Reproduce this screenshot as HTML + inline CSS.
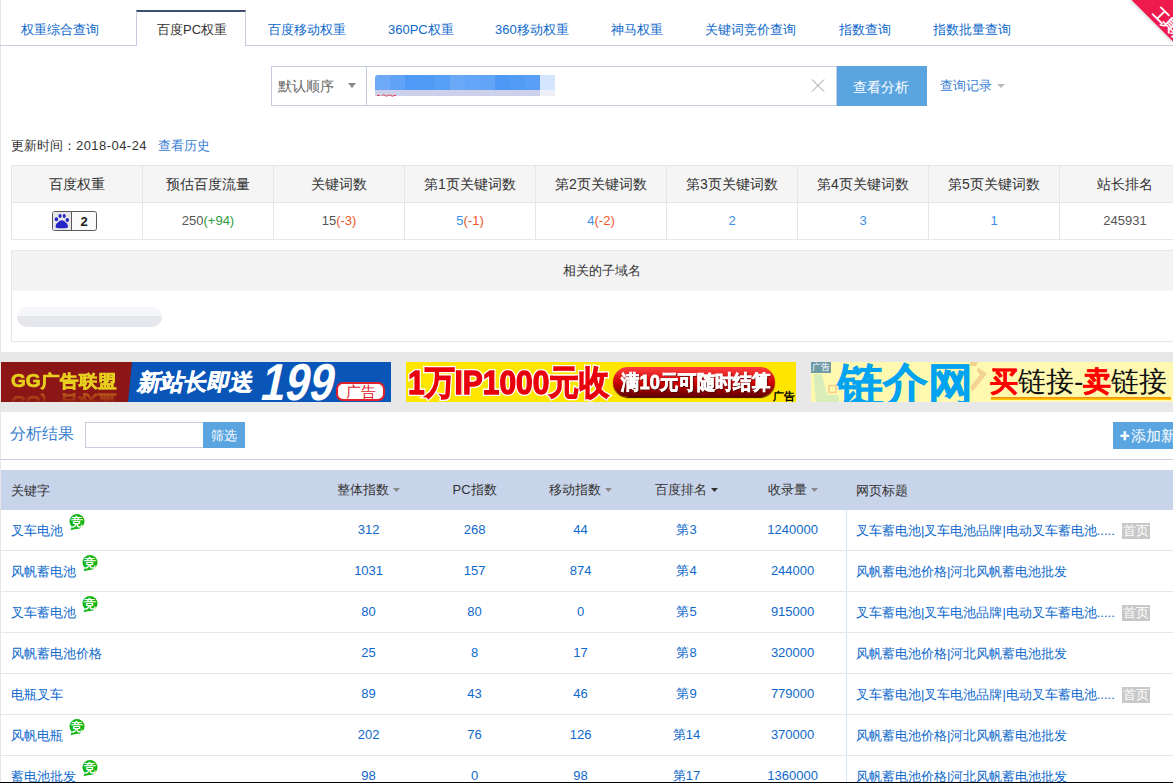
<!DOCTYPE html>
<html><head><meta charset="utf-8">
<style>
*{margin:0;padding:0;box-sizing:border-box}
html,body{width:1173px;height:783px;overflow:hidden;background:#fff}
body{position:relative;font-family:"Liberation Sans",sans-serif;font-size:13px;color:#333}
.a{position:absolute}
.t{position:absolute;white-space:nowrap;line-height:15px}
.blue{color:#0e69cc}
.c1h{top:166px;width:131px;height:37px;line-height:36px;text-align:center;background:#f5f5f5;border-right:1px solid #e6e6e6;border-bottom:1px solid #e6e6e6;color:#333;font-size:14px}
.c1b{top:203px;width:131px;height:37px;line-height:36px;text-align:center;border-right:1px solid #e6e6e6;border-bottom:1px solid #e6e6e6;font-size:13px}
.badge{display:inline-block;vertical-align:middle;width:45px;height:20px;border:1px solid #777;border-radius:2px;background:#fff;position:relative;margin-top:-3px}
.badge .paw{position:absolute;left:0;top:0;width:19px;height:18px;background:#ddd;border-right:1px solid #777}
.badge b{position:absolute;left:19px;top:0;width:24px;line-height:18px;text-align:center;font-size:13px;color:#222}
.mh{top:470px;width:106px;height:40px;line-height:40px;text-align:center;color:#333}
.mb{width:106px;height:40px;line-height:40px;text-align:center;color:#0e69cc}
.jing{display:inline-block;position:relative;top:-18px;margin-left:6px;width:16px;height:17px;vertical-align:top;margin-top:9px}
.sy{display:inline-block;margin-left:7px;width:28px;height:16px;line-height:16px;background:#c8c8c8;color:#fff;text-align:center;font-size:13px;vertical-align:0px}

</style></head><body>
<!-- left border -->
<div class="a" style="left:0;top:0;width:1px;height:783px;background:#e6e6e6"></div>

<!-- tabs -->
<div class="a" style="left:0;top:45px;width:1173px;height:1px;background:#c6cde0"></div>
<div class="a" style="left:136px;top:10px;width:110px;height:36px;background:#fff;border:1px solid #c6cde0;border-bottom:none;border-top:2px solid #3e4e6e"></div>
<div class="t blue" style="left:21px;top:22px">权重综合查询</div>
<div class="t" style="left:157px;top:22px;color:#333">百度PC权重</div>
<div class="t blue" style="left:268px;top:22px">百度移动权重</div>
<div class="t blue" style="left:388px;top:22px">360PC权重</div>
<div class="t blue" style="left:495px;top:22px">360移动权重</div>
<div class="t blue" style="left:611px;top:22px">神马权重</div>
<div class="t blue" style="left:705px;top:22px">关键词竞价查询</div>
<div class="t blue" style="left:839px;top:22px">指数查询</div>
<div class="t blue" style="left:933px;top:22px">指数批量查询</div>
<!-- ribbon -->
<div class="a" style="left:1100px;top:0;width:73px;height:60px;overflow:hidden">
<svg class="a" style="left:0;top:0" width="73" height="60"><defs><filter id="sh" x="-20%" y="-20%" width="140%" height="140%"><feGaussianBlur stdDeviation="1.5"/></filter></defs><polygon points="29,0 73,0 73,44" fill="#000" opacity=".12" filter="url(#sh)"/><polygon points="31.5,0 73,0 73,41.5" fill="#ee1a4e"/></svg>
<div class="a" style="left:0;top:0;width:73px;height:60px;clip-path:polygon(31.5px 0,73px 0,73px 41.5px)"><div class="t" style="left:61px;top:5px;font-size:15px;line-height:15px;font-weight:bold;color:#fff;transform:rotate(45deg);transform-origin:left top;letter-spacing:-2px">工具箱</div></div>
</div>

<!-- search -->
<div class="a" style="left:271px;top:66px;width:566px;height:40px;border:1px solid #c6cde0"></div>
<div class="a" style="left:366px;top:66px;width:1px;height:40px;background:#c6cde0"></div>
<div class="t" style="left:278px;top:78px;color:#666;font-size:14px;line-height:16px">默认顺序</div>
<svg class="a" style="left:348px;top:83px" width="8" height="5"><polygon points="0,0 8,0 4,5" fill="#888"/></svg>
<div class="a" style="left:375px;top:75px;width:165px;height:15px;border-radius:3px 0 0 0;background:linear-gradient(90deg,#6eaaf7 0px,#6eaaf7 15px,#60a3f7 15px,#60a3f7 30px,#4f9af7 30px,#4f9af7 45px,#509bf6 45px,#509bf6 60px,#579ff7 60px,#579ff7 75px,#6aa9f8 75px,#6aa9f8 90px,#64a6f8 90px,#64a6f8 105px,#62a5f7 105px,#62a5f7 120px,#4e99f6 120px,#4e99f6 135px,#529cf6 135px,#529cf6 150px,#5a9ff7 150px,#5a9ff7 165px)"></div>
<div class="a" style="left:375px;top:90px;width:165px;height:6px;background:#cdd0ea"></div>
<div class="a" style="left:540px;top:75px;width:15px;height:15px;background:#d4e6fd"></div>
<div class="a" style="left:540px;top:90px;width:15px;height:6px;background:#eef0f8"></div>
<svg class="a" style="left:377px;top:93px" width="20" height="4"><path d="M0,2.5 L3,2.5 M5,2.5 Q6.5,1 8,2.5 T11,2.5 T14,2.5 T17,2.5 L19,2.5" stroke="#e02020" stroke-width="1" fill="none" opacity=".8"/></svg>
<svg class="a" style="left:811px;top:79px" width="14" height="13"><path d="M1,0.5 L13,12.5 M13,0.5 L1,12.5" stroke="#999" stroke-width="1"/></svg>
<div class="a" style="left:837px;top:66px;width:90px;height:40px;background:#5aa5e0"></div>
<div class="t" style="left:853px;top:79px;color:#fff;font-size:14px;line-height:16px">查看分析</div>
<div class="t" style="left:940px;top:78px;color:#3b7fd6">查询记录</div>
<svg class="a" style="left:997px;top:84px" width="8" height="4"><polygon points="0,0 8,0 4,4" fill="#bbb"/></svg>

<!-- update time -->
<div class="t" style="left:11px;top:138px;color:#333">更新时间：<span style="letter-spacing:.45px">2018-04-24</span></div>
<div class="t" style="left:158px;top:138px;color:#3b7fd6">查看历史</div>

<div class="a" style="left:11px;top:165px;width:1179px;height:75px;border-left:1px solid #e6e6e6;border-top:1px solid #e6e6e6"></div>
<div class="a c1h" style="left:12px">百度权重</div>
<div class="a c1b" style="left:12px"><svg class="a" style="left:40px;top:8px" width="45" height="20"><rect x="0.5" y="0.5" width="44" height="19" rx="2" fill="#fafafa" stroke="#595959"/><rect x="1" y="1" width="19" height="18" fill="#e6e6e6"/><line x1="19.5" y1="1" x2="19.5" y2="19" stroke="#595959"/><ellipse cx="4.4" cy="8.2" rx="1.7" ry="2" fill="#2626c8"/><ellipse cx="8" cy="5" rx="1.6" ry="2.1" fill="#2626c8"/><ellipse cx="12.2" cy="5" rx="1.6" ry="2.1" fill="#2626c8"/><ellipse cx="15.3" cy="9" rx="1.7" ry="2" fill="#2626c8"/><path d="M9.8,9.3 C12,9.3 16,13 16,15.3 C16,17 14.5,17.3 9.8,17.3 C5,17.3 3.6,17 3.6,15.3 C3.6,13 7.6,9.3 9.8,9.3Z" fill="#2626c8"/><text x="32" y="15" text-anchor="middle" font-family="Liberation Sans" font-weight="bold" font-size="13" fill="#1a1a1a">2</text></svg></div>
<div class="a c1h" style="left:143px">预估百度流量</div>
<div class="a c1b" style="left:143px"><span style="color:#555">250</span><span style="color:#2e9a3c">(+94)</span></div>
<div class="a c1h" style="left:274px">关键词数</div>
<div class="a c1b" style="left:274px"><span style="color:#555">15</span><span style="color:#f0552a">(-3)</span></div>
<div class="a c1h" style="left:405px">第1页关键词数</div>
<div class="a c1b" style="left:405px"><span style="color:#3c8ee6">5</span><span style="color:#f0552a">(-1)</span></div>
<div class="a c1h" style="left:536px">第2页关键词数</div>
<div class="a c1b" style="left:536px"><span style="color:#3c8ee6">4</span><span style="color:#f0552a">(-2)</span></div>
<div class="a c1h" style="left:667px">第3页关键词数</div>
<div class="a c1b" style="left:667px"><span style="color:#3c8ee6">2</span></div>
<div class="a c1h" style="left:798px">第4页关键词数</div>
<div class="a c1b" style="left:798px"><span style="color:#3c8ee6">3</span></div>
<div class="a c1h" style="left:929px">第5页关键词数</div>
<div class="a c1b" style="left:929px"><span style="color:#3c8ee6">1</span></div>
<div class="a c1h" style="left:1060px">站长排名</div>
<div class="a c1b" style="left:1060px"><span style="color:#555">245931</span></div>
<div class="a" style="left:11px;top:250px;width:1179px;height:92px;border:1px solid #e6e6e6"></div>
<div class="a" style="left:12px;top:251px;width:1177px;height:40px;background:#f4f4f4"></div>
<div class="t" style="left:563px;top:263px;color:#333">相关的子域名</div>
<div class="a" style="left:17px;top:307px;width:145px;height:20px;border-radius:10px;background:linear-gradient(#f5f6f9 0,#f5f6f9 45%,#e6e7ed 45%,#e6e7ed 100%)"></div>
<div class="a" style="left:1px;top:352px;width:1172px;height:60px;background:#e8e8e8"></div>
<div class="a" style="left:1px;top:362px;width:390px;height:40px;background:#0a55b8;overflow:hidden">
 <svg class="a" style="left:0;top:0" width="135" height="40"><polygon points="0,0 131,0 127,40 0,40" fill="#8c1515"/></svg>
 <div class="t" style="left:10px;top:9px;font-size:19px;line-height:22px;font-weight:bold;color:#e6cf1e;-webkit-text-stroke:.7px #e6cf1e;transform:scaleY(.92);transform-origin:left top">GG广告联盟</div>
 <div class="a" style="left:0;top:30px;width:130px;height:10px;overflow:hidden;-webkit-mask-image:linear-gradient(rgba(0,0,0,.75),rgba(0,0,0,.1))"><div class="t" style="left:10px;top:20px;font-size:19px;line-height:22px;font-weight:bold;color:#d0801a;-webkit-text-stroke:.7px #d0801a;transform:scaleY(-.92);transform-origin:left top">GG广告联盟</div></div>
 <div class="t" style="left:138px;top:7px;font-size:23px;line-height:26px;font-weight:bold;color:#fff;-webkit-text-stroke:.5px #fff;transform:skewX(-12deg)">新站长即送</div>
 <div class="t" style="left:267px;top:-6px;font-size:52px;line-height:52px;font-weight:bold;color:#fff;transform:skewX(-12deg) scaleX(.84);transform-origin:left top">199</div>
 <div class="a" style="left:335px;top:20px;width:49px;height:19px;background:#fff;border:2px solid #e0202a;border-radius:7px"></div>
 <div class="t" style="left:345px;top:21px;font-size:15px;line-height:17px;color:#e0202a">广告</div>
</div>
<div class="a" style="left:406px;top:362px;width:390px;height:40px;background:#ffe600;overflow:hidden">
 <div class="t" style="left:2px;top:1px;font-size:34px;line-height:38px;font-weight:bold;color:#fff;-webkit-text-stroke:4px #fff;transform:scaleX(.88);transform-origin:left top">1万IP1000元收</div><div class="t" style="left:2px;top:1px;font-size:34px;line-height:38px;font-weight:bold;color:#e8000a;-webkit-text-stroke:1.3px #e8000a;transform:scaleX(.88);transform-origin:left top">1万IP1000元收</div>
 <div class="a" style="left:207px;top:5px;width:162px;height:30px;border-radius:15px;background:linear-gradient(#ff4040,#c80000 55%,#600000);box-shadow:0 1px 1px #400"></div>
 <div class="t" style="left:215px;top:8px;font-size:20px;line-height:24px;font-weight:bold;color:#fff;-webkit-text-stroke:.8px #fff;text-shadow:1px 1px 1px #300;transform:scaleX(.92);transform-origin:left top">满10元可随时结算</div>
 <div class="t" style="left:367px;top:28px;font-size:11px;line-height:12px;font-weight:bold;color:#000">广告</div>
</div>
<div class="a" style="left:811px;top:362px;width:362px;height:40px;background:#fff9b0;overflow:hidden">
 <svg class="a" style="left:0;top:0" width="190" height="40"><polygon points="2.5,12 11,12 16,33 28,33 28,40 5,40" fill="#d8edba"/><rect x="18" y="23.5" width="7" height="7" fill="none" stroke="#f5cf90" stroke-width="1.6"/><polygon points="159,0 167,0 165,4 159,4" fill="#f2d392"/><polygon points="167.4,5.4 175.9,11.8 161.4,29.7 159.3,25 169,12.6 165.7,8.8" fill="#f2d392"/></svg>
 <div class="a" style="left:0;top:0;width:20px;height:11px;background:#6f9aa8"></div>
 <div class="t" style="left:1px;top:0px;font-size:9px;line-height:11px;color:#fff">广告</div>
 <div class="t" style="left:27px;top:0px;font-size:45px;line-height:46px;font-weight:bold;color:#02a3f0;-webkit-text-stroke:.6px #02a3f0">链介网</div>
 <div class="a" style="left:180px;top:35px;width:180px;height:3px;background:linear-gradient(#f08a10,#ffd000)"></div>
 <div class="t" style="left:179px;top:4px;font-size:28px;line-height:32px;color:#111"><b style="color:#f00;-webkit-text-stroke:.5px #f00">买</b>链接-<b style="color:#f00;-webkit-text-stroke:.5px #f00">卖</b>链接</div>
</div>
</div>
<div class="t" style="left:10px;top:425px;font-size:16px;line-height:18px;color:#3a7fd0">分析结果</div>
<div class="a" style="left:85px;top:422px;width:119px;height:26px;border:1px solid #c6cde0"></div>
<div class="a" style="left:203px;top:422px;width:42px;height:26px;background:#5aa5e0"></div>
<div class="t" style="left:211px;top:428px;color:#fff">筛选</div>
<div class="a" style="left:1113px;top:422px;width:70px;height:27px;background:#5aa5e0"></div>
<div class="t" style="left:1119px;top:427px;color:#fff;font-size:15px;line-height:17px"><b style="font-size:16px;-webkit-text-stroke:.5px #fff;margin-left:1px">+</b><span style="margin-left:2px">添加新词</span></div>
<div class="a" style="left:1px;top:459px;width:1172px;height:1px;background:#c6cde0"></div>
<div class="a" style="left:1px;top:470px;width:1172px;height:40px;background:#c8d4ea"></div>
<div class="a" style="left:846px;top:510px;width:1px;height:273px;background:#d6e4f7"></div>
<div class="t" style="left:11px;top:483px">关键字</div>
<div class="a mh" style="left:315.6px">整体指数<svg width="7" height="4" style="margin-left:4px;vertical-align:2px"><polygon points="0,0 7,0 3.5,4" fill="#888"/></svg></div>
<div class="a mh" style="left:421.6px">PC指数</div>
<div class="a mh" style="left:527.6px">移动指数<svg width="7" height="4" style="margin-left:4px;vertical-align:2px"><polygon points="0,0 7,0 3.5,4" fill="#888"/></svg></div>
<div class="a mh" style="left:633.6px">百度排名<svg width="7" height="4" style="margin-left:4px;vertical-align:2px"><polygon points="0,0 7,0 3.5,4" fill="#333"/></svg></div>
<div class="a mh" style="left:739.6px">收录量<svg width="7" height="4" style="margin-left:4px;vertical-align:2px"><polygon points="0,0 7,0 3.5,4" fill="#888"/></svg></div>
<div class="t" style="left:856px;top:483px">网页标题</div>
<div class="a" style="left:1px;top:550px;width:1172px;height:1px;background:#e6e6e6"></div>
<div class="t blue" style="left:11px;top:523px">叉车电池<span class="jing"><svg width="16" height="17" style="display:block"><circle cx="8" cy="7.5" r="7.5" fill="#12b512"/><path d="M3.5,11.5 L1.5,16.3 L9,14.5 Z" fill="#12b512"/><text x="8" y="12.2" text-anchor="middle" font-family="Liberation Sans" font-size="11.5" font-weight="bold" fill="#fff">竞</text></svg></span></div>
<div class="a mb" style="left:315.6px;top:510px">312</div>
<div class="a mb" style="left:421.6px;top:510px">268</div>
<div class="a mb" style="left:527.6px;top:510px">44</div>
<div class="a mb" style="left:633.6px;top:510px">第3</div>
<div class="a mb" style="left:739.6px;top:510px">1240000</div>
<div class="t blue" style="left:856px;top:523px">叉车蓄电池|叉车电池品牌|电动叉车蓄电池.....<span class="sy">首页</span></div>
<div class="a" style="left:1px;top:591px;width:1172px;height:1px;background:#e6e6e6"></div>
<div class="t blue" style="left:11px;top:564px">风帆蓄电池<span class="jing"><svg width="16" height="17" style="display:block"><circle cx="8" cy="7.5" r="7.5" fill="#12b512"/><path d="M3.5,11.5 L1.5,16.3 L9,14.5 Z" fill="#12b512"/><text x="8" y="12.2" text-anchor="middle" font-family="Liberation Sans" font-size="11.5" font-weight="bold" fill="#fff">竞</text></svg></span></div>
<div class="a mb" style="left:315.6px;top:551px">1031</div>
<div class="a mb" style="left:421.6px;top:551px">157</div>
<div class="a mb" style="left:527.6px;top:551px">874</div>
<div class="a mb" style="left:633.6px;top:551px">第4</div>
<div class="a mb" style="left:739.6px;top:551px">244000</div>
<div class="t blue" style="left:856px;top:564px">风帆蓄电池价格|河北风帆蓄电池批发</div>
<div class="a" style="left:1px;top:632px;width:1172px;height:1px;background:#e6e6e6"></div>
<div class="t blue" style="left:11px;top:605px">叉车蓄电池<span class="jing"><svg width="16" height="17" style="display:block"><circle cx="8" cy="7.5" r="7.5" fill="#12b512"/><path d="M3.5,11.5 L1.5,16.3 L9,14.5 Z" fill="#12b512"/><text x="8" y="12.2" text-anchor="middle" font-family="Liberation Sans" font-size="11.5" font-weight="bold" fill="#fff">竞</text></svg></span></div>
<div class="a mb" style="left:315.6px;top:592px">80</div>
<div class="a mb" style="left:421.6px;top:592px">80</div>
<div class="a mb" style="left:527.6px;top:592px">0</div>
<div class="a mb" style="left:633.6px;top:592px">第5</div>
<div class="a mb" style="left:739.6px;top:592px">915000</div>
<div class="t blue" style="left:856px;top:605px">叉车蓄电池|叉车电池品牌|电动叉车蓄电池.....<span class="sy">首页</span></div>
<div class="a" style="left:1px;top:673px;width:1172px;height:1px;background:#e6e6e6"></div>
<div class="t blue" style="left:11px;top:646px">风帆蓄电池价格</div>
<div class="a mb" style="left:315.6px;top:633px">25</div>
<div class="a mb" style="left:421.6px;top:633px">8</div>
<div class="a mb" style="left:527.6px;top:633px">17</div>
<div class="a mb" style="left:633.6px;top:633px">第8</div>
<div class="a mb" style="left:739.6px;top:633px">320000</div>
<div class="t blue" style="left:856px;top:646px">风帆蓄电池价格|河北风帆蓄电池批发</div>
<div class="a" style="left:1px;top:714px;width:1172px;height:1px;background:#e6e6e6"></div>
<div class="t blue" style="left:11px;top:687px">电瓶叉车</div>
<div class="a mb" style="left:315.6px;top:674px">89</div>
<div class="a mb" style="left:421.6px;top:674px">43</div>
<div class="a mb" style="left:527.6px;top:674px">46</div>
<div class="a mb" style="left:633.6px;top:674px">第9</div>
<div class="a mb" style="left:739.6px;top:674px">779000</div>
<div class="t blue" style="left:856px;top:687px">叉车蓄电池|叉车电池品牌|电动叉车蓄电池.....<span class="sy">首页</span></div>
<div class="a" style="left:1px;top:755px;width:1172px;height:1px;background:#e6e6e6"></div>
<div class="t blue" style="left:11px;top:728px">风帆电瓶<span class="jing"><svg width="16" height="17" style="display:block"><circle cx="8" cy="7.5" r="7.5" fill="#12b512"/><path d="M3.5,11.5 L1.5,16.3 L9,14.5 Z" fill="#12b512"/><text x="8" y="12.2" text-anchor="middle" font-family="Liberation Sans" font-size="11.5" font-weight="bold" fill="#fff">竞</text></svg></span></div>
<div class="a mb" style="left:315.6px;top:715px">202</div>
<div class="a mb" style="left:421.6px;top:715px">76</div>
<div class="a mb" style="left:527.6px;top:715px">126</div>
<div class="a mb" style="left:633.6px;top:715px">第14</div>
<div class="a mb" style="left:739.6px;top:715px">370000</div>
<div class="t blue" style="left:856px;top:728px">风帆蓄电池价格|河北风帆蓄电池批发</div>
<div class="a" style="left:1px;top:796px;width:1172px;height:1px;background:#e6e6e6"></div>
<div class="t blue" style="left:11px;top:769px">蓄电池批发<span class="jing"><svg width="16" height="17" style="display:block"><circle cx="8" cy="7.5" r="7.5" fill="#12b512"/><path d="M3.5,11.5 L1.5,16.3 L9,14.5 Z" fill="#12b512"/><text x="8" y="12.2" text-anchor="middle" font-family="Liberation Sans" font-size="11.5" font-weight="bold" fill="#fff">竞</text></svg></span></div>
<div class="a mb" style="left:315.6px;top:756px">98</div>
<div class="a mb" style="left:421.6px;top:756px">0</div>
<div class="a mb" style="left:527.6px;top:756px">98</div>
<div class="a mb" style="left:633.6px;top:756px">第17</div>
<div class="a mb" style="left:739.6px;top:756px">1360000</div>
<div class="t blue" style="left:856px;top:769px">风帆蓄电池价格|河北风帆蓄电池批发</div>

<!-- bottom black line -->
<div class="a" style="left:0;top:782px;width:1173px;height:1px;background:#000"></div>
</body></html>
